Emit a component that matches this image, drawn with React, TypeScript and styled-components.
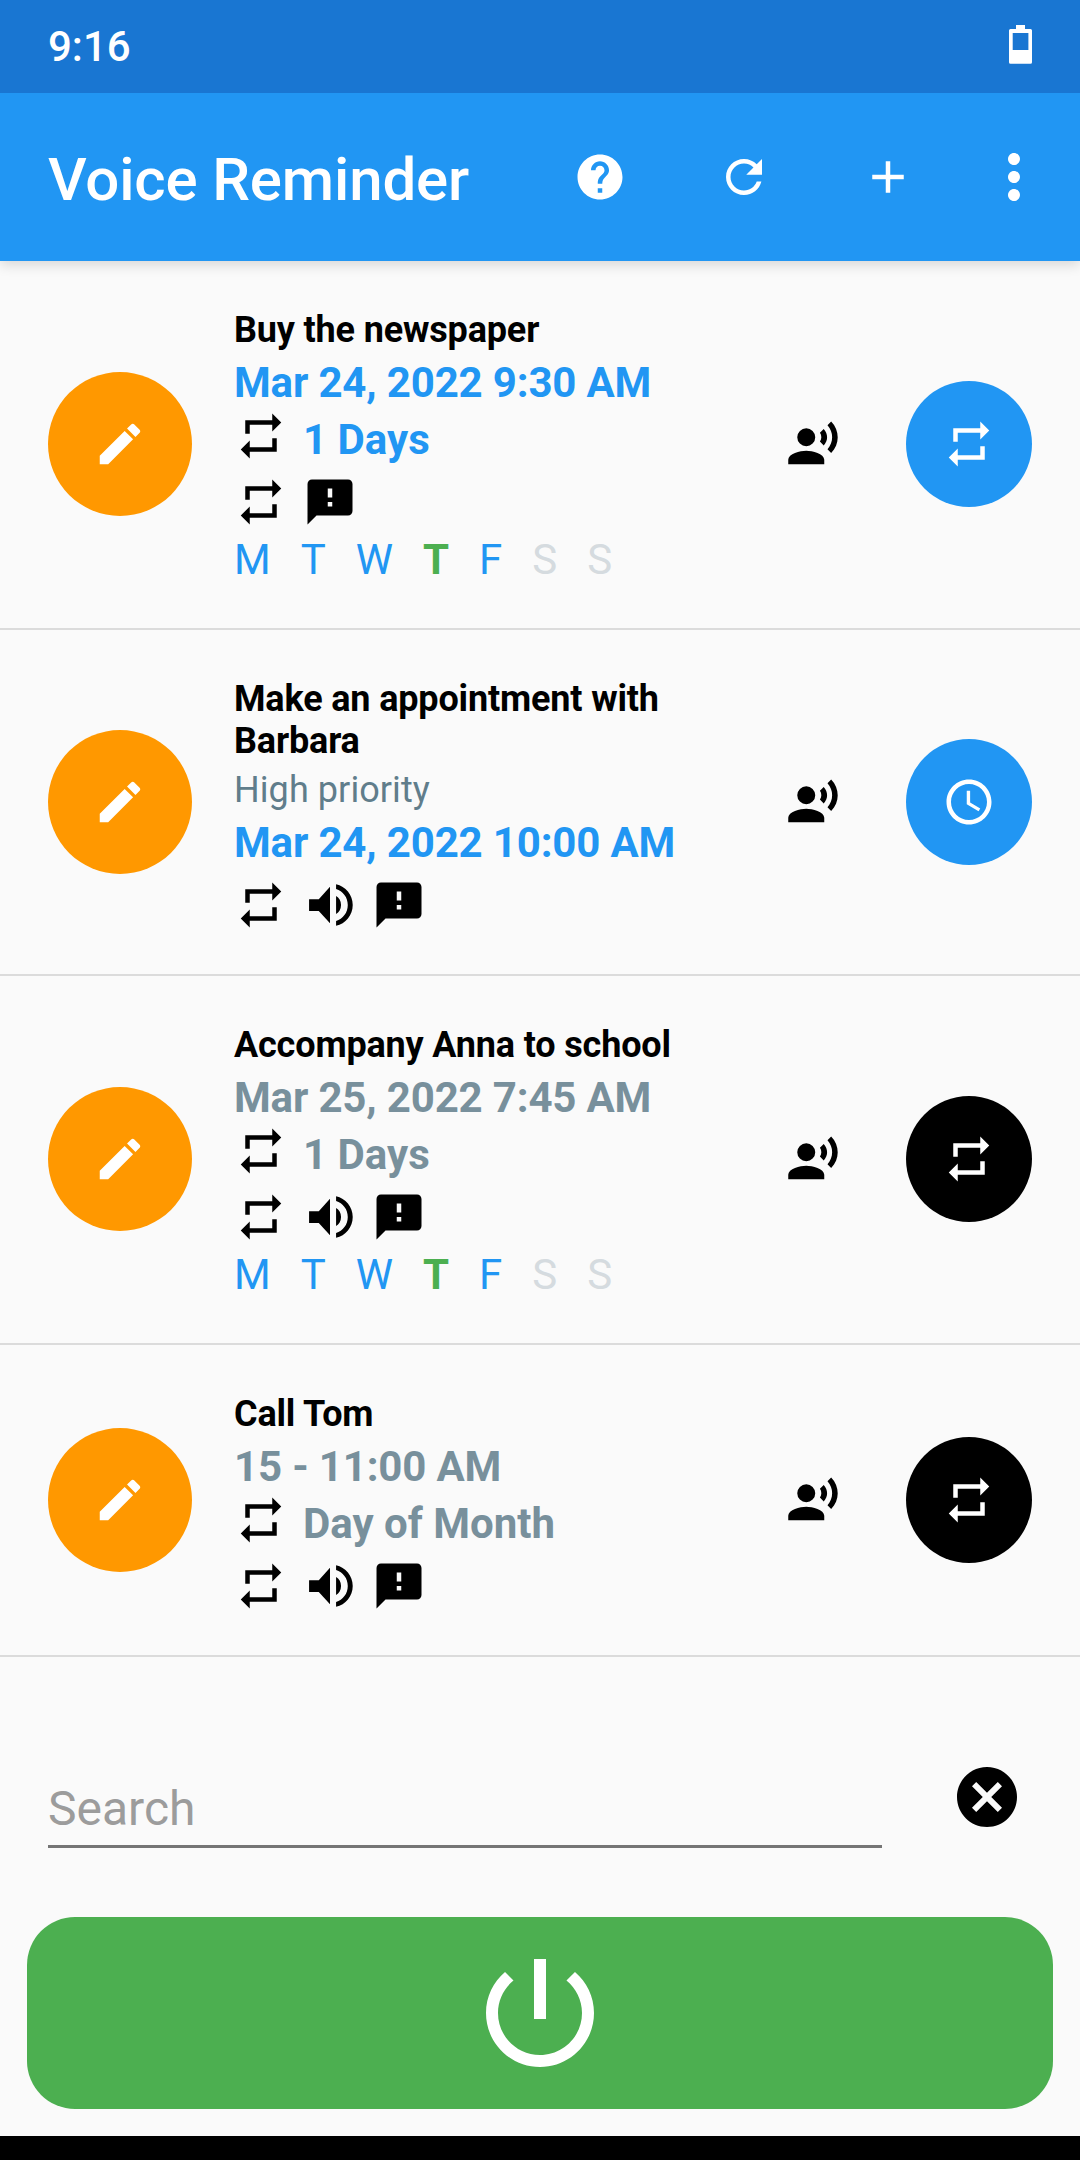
import React from "react";
import styled, { createGlobalStyle } from "styled-components";

const colors = {
  statusBar: "#1976d2",
  primary: "#2196f3",
  accent: "#ff9800",
  active: "#4caf50",
  muted: "#78909c",
  note: "#607d8b",
  off: "#d5dbdf",
  surface: "#fafafa",
};

const GlobalStyle = createGlobalStyle`
  * { box-sizing: border-box; }
  body {
    margin: 0;
    background: ${colors.surface};
    font-family: Roboto, "Liberation Sans", sans-serif;
  }
  button {
    border: 0;
    padding: 0;
    font: inherit;
    background: none;
  }
`;

const Screen = styled.div`
  width: 1080px;
  height: 2160px;
  display: flex;
  flex-direction: column;
  overflow: hidden;
  background: ${colors.surface};
`;

const StatusBar = styled.div`
  flex: none;
  height: 93px;
  padding: 0 48px;
  display: flex;
  justify-content: space-between;
  background: ${colors.statusBar};
  color: #fff;
  z-index: 2;
`;

const Clock = styled.span`
  padding-top: 22px;
  font-size: 42px;
  line-height: 49px;
  font-weight: 500;
`;

const Battery = styled.svg`
  display: block;
  width: 23px;
  height: 39px;
  margin-top: 25px;
`;

const AppBar = styled.header`
  flex: none;
  height: 168px;
  padding-left: 48px;
  display: flex;
  align-items: center;
  background: ${colors.primary};
  color: #fff;
  box-shadow: 0 4px 12px rgba(0, 0, 0, 0.14);
  z-index: 1;
`;

const AppTitle = styled.h1`
  flex: 1;
  margin: 0;
  padding-top: 6px;
  font-size: 60px;
  line-height: 70px;
  font-weight: 500;
  letter-spacing: -0.14px;
`;

const BarButton = styled.button<{ $end?: boolean }>`
  width: ${(p) => (p.$end ? 108 : 144)}px;
  margin-right: ${(p) => (p.$end ? 12 : 0)}px;
  height: 144px;
  display: flex;
  align-items: center;
  justify-content: center;
  color: inherit;
`;

const Glyph = styled.svg<{ $size: number }>`
  display: block;
  flex: none;
  width: ${(p) => p.$size}px;
  height: ${(p) => p.$size}px;
  fill: currentColor;
`;

const List = styled.main`
  flex: none;
  display: flex;
  flex-direction: column;
`;

const Row = styled.article<{ $tall?: boolean }>`
  display: flex;
  align-items: center;
  padding: 0 48px ${(p) => (p.$tall ? 1 : 0)}px;
  border-bottom: 2px solid #dbdbdb;
`;

const RoundButton = styled.button<{ $size: number; $color: string }>`
  flex: none;
  width: ${(p) => p.$size}px;
  height: ${(p) => p.$size}px;
  border-radius: 50%;
  display: flex;
  align-items: center;
  justify-content: center;
  background: ${(p) => p.$color};
  color: #fff;
`;

const Details = styled.div`
  flex: none;
  width: 504px;
  margin: 0 48px 0 42px;
  padding: 48px 0 42px;
`;

const Title = styled.h2`
  margin: 0;
  font-size: 36px;
  line-height: 42px;
  font-weight: 700;
  letter-spacing: -0.16px;
  color: #000;
`;

const Note = styled.div`
  margin-top: 7px;
  font-size: 36px;
  line-height: 42px;
  letter-spacing: 0.08px;
  color: ${colors.note};
`;

const When = styled.div<{ $color: string }>`
  margin-top: 7px;
  font-size: 42px;
  line-height: 49px;
  font-weight: 700;
  letter-spacing: -0.16px;
  color: ${(p) => p.$color};
`;

const Interval = styled.div`
  height: 55px;
  margin-top: 2px;
  display: flex;
  align-items: flex-start;
  gap: 15px;
`;

const IntervalText = styled.span<{ $color: string }>`
  padding-top: 6px;
  font-size: 42px;
  line-height: 49px;
  font-weight: 700;
  color: ${(p) => p.$color};
`;

const Options = styled.div`
  margin-top: 11px;
  display: flex;
  gap: 15px;
`;

const Week = styled.div`
  margin-top: 6px;
  padding-bottom: 1px;
  display: flex;
  gap: 30px;
`;

const Day = styled.span<{ $state: DayState }>`
  font-size: 42px;
  line-height: 49px;
  font-weight: ${(p) => (p.$state === "today" ? 700 : 400)};
  color: ${(p) =>
    p.$state === "today" ? colors.active : p.$state === "on" ? colors.primary : colors.off};
`;

const VoiceButton = styled.button`
  flex: 1;
  display: flex;
  color: #000;
`;

const SearchBar = styled.div`
  flex: none;
  height: 260px;
  padding: 74px 57px 0 48px;
  display: flex;
  justify-content: space-between;
  align-items: flex-start;
`;

const SearchInput = styled.input`
  width: 834px;
  height: 117px;
  padding: 47px 0 7px;
  border: 0;
  border-bottom: 3px solid #757575;
  outline: 0;
  background: none;
  font: 400 48px/56px Roboto, "Liberation Sans", sans-serif;
  &::placeholder {
    color: #9c9c9c;
    opacity: 1;
  }
`;

const ClearButton = styled.button`
  margin-top: 30px;
  color: #000;
`;

const PowerButton = styled.button`
  flex: none;
  height: 192px;
  margin: 0 27px;
  border-radius: 48px;
  display: flex;
  align-items: center;
  justify-content: center;
  background: ${colors.active};
  color: #fff;
`;

const NavBar = styled.footer`
  flex: none;
  height: 24px;
  margin-top: auto;
  background: #000;
`;

const paths = {
  help: "M12 2C6.48 2 2 6.48 2 12s4.48 10 10 10 10-4.48 10-10S17.52 2 12 2zm1 17h-2v-2h2v2zm2.07-7.75l-.9.92C13.45 12.9 13 13.5 13 15h-2v-.5c0-1.1.45-2.1 1.17-2.83l1.24-1.26c.37-.36.59-.86.59-1.41 0-1.1-.9-2-2-2s-2 .9-2 2H8c0-2.21 1.79-4 4-4s4 1.79 4 4c0 .88-.36 1.68-.93 2.25z",
  refresh:
    "M17.65 6.35C16.2 4.9 14.21 4 12 4c-4.42 0-7.99 3.58-7.99 8s3.57 8 7.99 8c3.73 0 6.84-2.55 7.73-6h-2.08c-.82 2.33-3.04 4-5.65 4-3.31 0-6-2.69-6-6s2.69-6 6-6c1.66 0 3.14.69 4.22 1.78L13 11h7V4l-2.35 2.35z",
  add: "M19 13h-6v6h-2v-6H5v-2h6V5h2v6h6v2z",
  more: "M12 8c1.1 0 2-.9 2-2s-.9-2-2-2-2 .9-2 2 .9 2 2 2zm0 2c-1.1 0-2 .9-2 2s.9 2 2 2 2-.9 2-2-.9-2-2-2zm0 6c-1.1 0-2 .9-2 2s.9 2 2 2 2-.9 2-2-.9-2-2-2z",
  edit: "M3 17.25V21h3.75L17.81 9.94l-3.75-3.75L3 17.25zM20.71 7.04c.39-.39.39-1.02 0-1.41l-2.34-2.34c-.39-.39-1.02-.39-1.41 0l-1.83 1.83 3.75 3.75 1.83-1.83z",
  repeat: "M7 7h10v3l4-4-4-4v3H5v6h2V7zm10 10H7v-3l-4 4 4 4v-3h12v-6h-2v4z",
  clock:
    "M11.99 2C6.47 2 2 6.48 2 12s4.47 10 9.99 10C17.52 22 22 17.52 22 12S17.52 2 11.99 2zM12 20c-4.42 0-8-3.58-8-8s3.58-8 8-8 8 3.58 8 8-3.58 8-8 8zm.5-13H11v6l5.25 3.15.75-1.23-4.5-2.67z",
  voice:
    "M9 5a4 4 0 1 0 0 8a4 4 0 1 0 0-8zM9 15c-2.67 0-8 1.34-8 4v2h16v-2c0-2.66-5.33-4-8-4zm7.76-9.64l-1.68 1.69c.84 1.18.84 2.71 0 3.89l1.68 1.69c2.02-2.02 2.02-5.07 0-7.27zM20.07 2l-1.63 1.63c2.77 3.02 2.77 7.56 0 10.74L20.07 16c3.9-3.89 3.91-9.95 0-14z",
  volume:
    "M2.7 9.4v5.3H7l5 5.4V3.9L7 9.4H2.7zM14.7 8v8c1.3-.7 2.2-2.2 2.2-4S16 8.7 14.7 8zM14.7 2.75v2.15c3 .9 5.2 3.7 5.2 7.1s-2.2 6.2-5.2 7.1v2.15c4.2-.9 7.4-4.65 7.4-9.25s-3.2-8.35-7.4-9.25z",
  feedback:
    "M20 2H4c-1.1 0-1.99.9-1.99 2L2 22l4-4h14c1.1 0 2-.9 2-2V4c0-1.1-.9-2-2-2zm-7 12h-2v-2h2v2zm0-4h-2V6h2v4z",
  cancel:
    "M12 2C6.47 2 2 6.47 2 12s4.47 10 10 10 10-4.47 10-10S17.53 2 12 2zm5 13.59L15.59 17 12 13.41 8.41 17 7 15.59 10.59 12 7 8.41 8.41 7 12 10.59 15.59 7 17 8.41 13.41 12 17 15.59z",
  power:
    "M13 3h-2v10h2V3zm4.83 2.17l-1.42 1.42C17.99 7.86 19 9.81 19 12c0 3.87-3.13 7-7 7s-7-3.13-7-7c0-2.19 1.01-4.14 2.58-5.42L6.17 5.17C4.23 6.82 3 9.26 3 12c0 4.97 4.03 9 9 9s9-4.03 9-9c0-2.74-1.23-5.18-3.17-6.83z",
};

type IconName = keyof typeof paths;
type DayState = "on" | "today" | "off";

function Icon({ name, size = 54 }: { name: IconName; size?: number }) {
  return (
    <Glyph $size={size} viewBox="0 0 24 24" aria-hidden="true">
      <path d={paths[name]} />
    </Glyph>
  );
}

interface Reminder {
  title: string;
  note?: string;
  when: string;
  interval?: string;
  options: IconName[];
  week?: boolean;
  today: boolean;
  kind: IconName;
}

const reminders: Reminder[] = [
  {
    title: "Buy the newspaper",
    when: "Mar 24, 2022 9:30 AM",
    interval: "1 Days",
    options: ["repeat", "feedback"],
    week: true,
    today: true,
    kind: "repeat",
  },
  {
    title: "Make an appointment with Barbara",
    note: "High priority",
    when: "Mar 24, 2022 10:00 AM",
    options: ["repeat", "volume", "feedback"],
    today: true,
    kind: "clock",
  },
  {
    title: "Accompany Anna to school",
    when: "Mar 25, 2022 7:45 AM",
    interval: "1 Days",
    options: ["repeat", "volume", "feedback"],
    week: true,
    today: false,
    kind: "repeat",
  },
  {
    title: "Call Tom",
    when: "15 - 11:00 AM",
    interval: "Day of Month",
    options: ["repeat", "volume", "feedback"],
    today: false,
    kind: "repeat",
  },
];

const weekDays: [string, DayState][] = [
  ["M", "on"],
  ["T", "on"],
  ["W", "on"],
  ["T", "today"],
  ["F", "on"],
  ["S", "off"],
  ["S", "off"],
];

function ReminderRow({ item }: { item: Reminder }) {
  const textColor = item.today ? colors.primary : colors.muted;
  return (
    <Row $tall={item.week}>
      <RoundButton $size={144} $color={colors.accent}>
        <Icon name="edit" />
      </RoundButton>
      <Details>
        <Title>{item.title}</Title>
        {item.note && <Note>{item.note}</Note>}
        <When $color={textColor}>{item.when}</When>
        {item.interval && (
          <Interval>
            <Icon name="repeat" />
            <IntervalText $color={textColor}>{item.interval}</IntervalText>
          </Interval>
        )}
        <Options>
          {item.options.map((name) => (
            <Icon key={name} name={name} />
          ))}
        </Options>
        {item.week && (
          <Week>
            {weekDays.map(([label, state], i) => (
              <Day key={i} $state={state}>
                {label}
              </Day>
            ))}
          </Week>
        )}
      </Details>
      <VoiceButton>
        <Icon name="voice" />
      </VoiceButton>
      <RoundButton $size={126} $color={item.today ? colors.primary : "#000"}>
        <Icon name={item.kind} />
      </RoundButton>
    </Row>
  );
}

export default function App() {
  return (
    <Screen>
      <GlobalStyle />
      <StatusBar>
        <Clock>9:16</Clock>
        <Battery viewBox="0 0 23 39">
          <path
            fill="#fff"
            fillRule="evenodd"
            d="M7 0h9v4h5.5a1.5 1.5 0 0 1 1.5 1.5v31.7a1.5 1.5 0 0 1-1.5 1.5h-20a1.5 1.5 0 0 1-1.5-1.5v-31.7a1.5 1.5 0 0 1 1.5-1.5h5.5zM3.7 7.9v17h15.7v-17z"
          />
        </Battery>
      </StatusBar>
      <AppBar>
        <AppTitle>Voice Reminder</AppTitle>
        <BarButton>
          <Icon name="help" />
        </BarButton>
        <BarButton>
          <Icon name="refresh" />
        </BarButton>
        <BarButton>
          <Icon name="add" />
        </BarButton>
        <BarButton $end>
          <Icon name="more" size={72} />
        </BarButton>
      </AppBar>
      <List>
        {reminders.map((item) => (
          <ReminderRow key={item.title} item={item} />
        ))}
      </List>
      <SearchBar>
        <SearchInput placeholder="Search" />
        <ClearButton>
          <Icon name="cancel" size={72} />
        </ClearButton>
      </SearchBar>
      <PowerButton>
        <Icon name="power" size={144} />
      </PowerButton>
      <NavBar />
    </Screen>
  );
}
